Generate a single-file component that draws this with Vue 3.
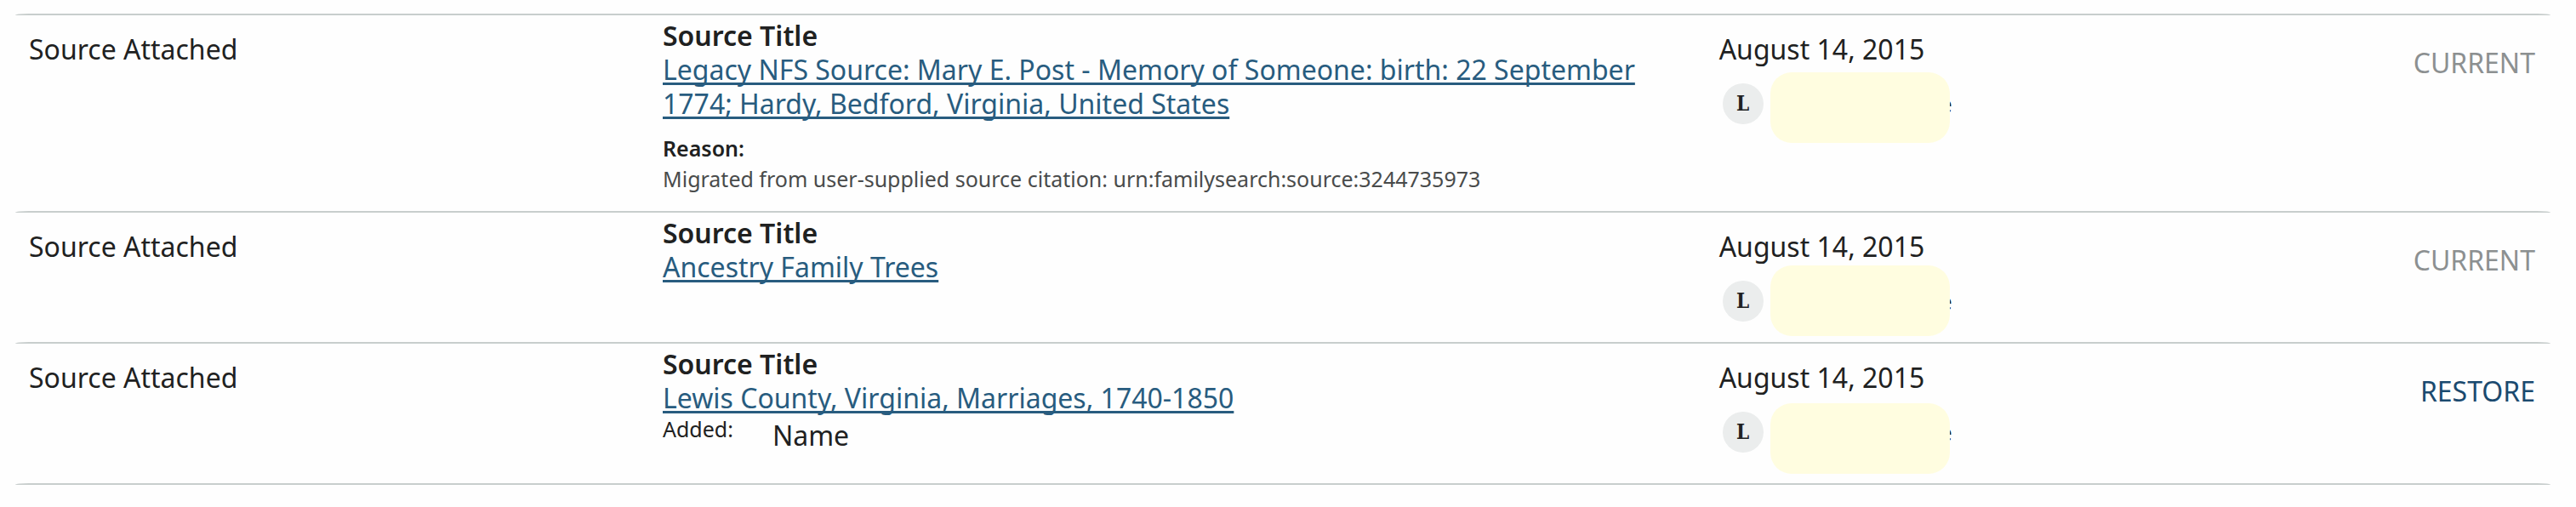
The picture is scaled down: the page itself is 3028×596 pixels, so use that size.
<script setup>
const changes = [
  {
    id: 1,
    action: 'Source Attached',
    title: 'Legacy NFS Source: Mary E. Post - Memory of Someone: birth: 22 September 1774; Hardy, Bedford, Virginia, United States',
    reason: 'Migrated from user-supplied source citation: urn:familysearch:source:3244735973',
    date: 'August 14, 2015',
    initial: 'L',
    cover: 'cover-middle',
    current: true
  },
  {
    id: 2,
    action: 'Source Attached',
    title: 'Ancestry Family Trees',
    date: 'August 14, 2015',
    initial: 'L',
    cover: 'cover-high',
    current: true
  },
  {
    id: 3,
    action: 'Source Attached',
    title: 'Lewis County, Virginia, Marriages, 1740-1850',
    added: 'Name',
    date: 'August 14, 2015',
    initial: 'L',
    cover: 'cover-low',
    current: false
  }
]
</script>

<template>
  <main class="change-log">
    <table class="changes">
      <colgroup>
        <col class="col-action" />
        <col class="col-detail" />
        <col class="col-date" />
        <col class="col-status" />
      </colgroup>
      <tbody>
        <tr v-for="change in changes" :key="change.id">
          <td class="action">{{ change.action }}</td>
          <td class="detail">
            <div class="label">Source Title</div>
            <a class="source" href="#">{{ change.title }}</a>
            <div v-if="change.reason" class="reason">
              <div class="reason-label">Reason:</div>
              <div class="reason-text">{{ change.reason }}</div>
            </div>
            <div v-if="change.added" class="added">
              <span class="added-label">Added:</span>
              <span class="added-value">{{ change.added }}</span>
            </div>
          </td>
          <td class="date">
            <div>{{ change.date }}</div>
            <div class="person">
              <span class="avatar">{{ change.initial }}</span>
              <span class="person-name">e<span class="cover" :class="change.cover"></span></span>
            </div>
          </td>
          <td class="status">
            <span v-if="change.current" class="current">CURRENT</span>
            <button v-else type="button" class="restore">RESTORE</button>
          </td>
        </tr>
      </tbody>
    </table>
    <div class="end-rule"></div>
  </main>
</template>

<style>
body {
  background: #fefefe;
}
</style>

<style scoped>
.change-log {
  padding: 16px 30px 24px 18px;
  color: #202121;
  font-family: "Noto Sans", "Open Sans", sans-serif;
  font-size: 32px;
  line-height: 40px;
}

.changes {
  width: 100%;
  table-layout: fixed;
  border-spacing: 0;
}

.col-action {
  width: 25%;
}

.col-detail {
  width: 41.667%;
}

td {
  padding: 20px 16px 24px;
  border-top: 2px solid #c8cecd;
  text-align: left;
  vertical-align: top;
}

td:first-child {
  border-top-left-radius: 16px 2px;
}

td:last-child {
  border-top-right-radius: 16px 2px;
}

.end-rule {
  height: 16px;
  border-top: 2px solid #c8cecd;
  border-radius: 16px 16px 0 0 / 2px 2px 0 0;
}

td.detail {
  padding-top: 4px;
  padding-bottom: 20px;
}

.label {
  font-weight: 600;
}

.source {
  display: block;
  width: fit-content;
  color: #285c7f;
  text-decoration: underline;
  text-decoration-thickness: 3px;
  text-decoration-skip-ink: none;
  text-underline-offset: 3px;
}

.reason {
  margin-top: 14px;
  font-size: 25px;
  line-height: 36px;
}

.reason-label {
  font-weight: 600;
}

.reason-text {
  color: #494b4b;
}

.added {
  display: flex;
  gap: 46px;
  padding-bottom: 16px;
}

.added-label {
  font-size: 25px;
  line-height: 32px;
}

.added-value {
  padding-top: 4px;
}

.person {
  display: flex;
  align-items: center;
  gap: 8px;
  margin: 20px 0 0 4px;
}

.avatar {
  flex: none;
  width: 48px;
  height: 48px;
  border-radius: 50%;
  background: #ebeded;
  font-family: "DejaVu Serif Condensed", "DejaVu Serif", serif;
  font-size: 24px;
  font-weight: 700;
  line-height: 48px;
  text-align: center;
}

.person-name {
  position: relative;
  width: 214px;
  font-size: 25px;
  line-height: 48px;
  text-align: right;
}

/* Hides the contributor's name, reaching past the text above and below. */
.cover {
  position: absolute;
  left: 0;
  width: 211px;
  height: 83px;
  border-radius: 25px;
  background: #fffde0;
}

.cover-high {
  top: -18px;
}

.cover-middle {
  top: -13px;
}

.cover-low {
  top: -10px;
}

td.status {
  padding-top: 36px;
  padding-right: 18px;
  text-align: right;
}

.current {
  color: #8c9091;
}

.restore {
  padding: 0;
  border: 0;
  background: none;
  color: #1b4a6f;
  font: inherit;
  cursor: pointer;
}
</style>
